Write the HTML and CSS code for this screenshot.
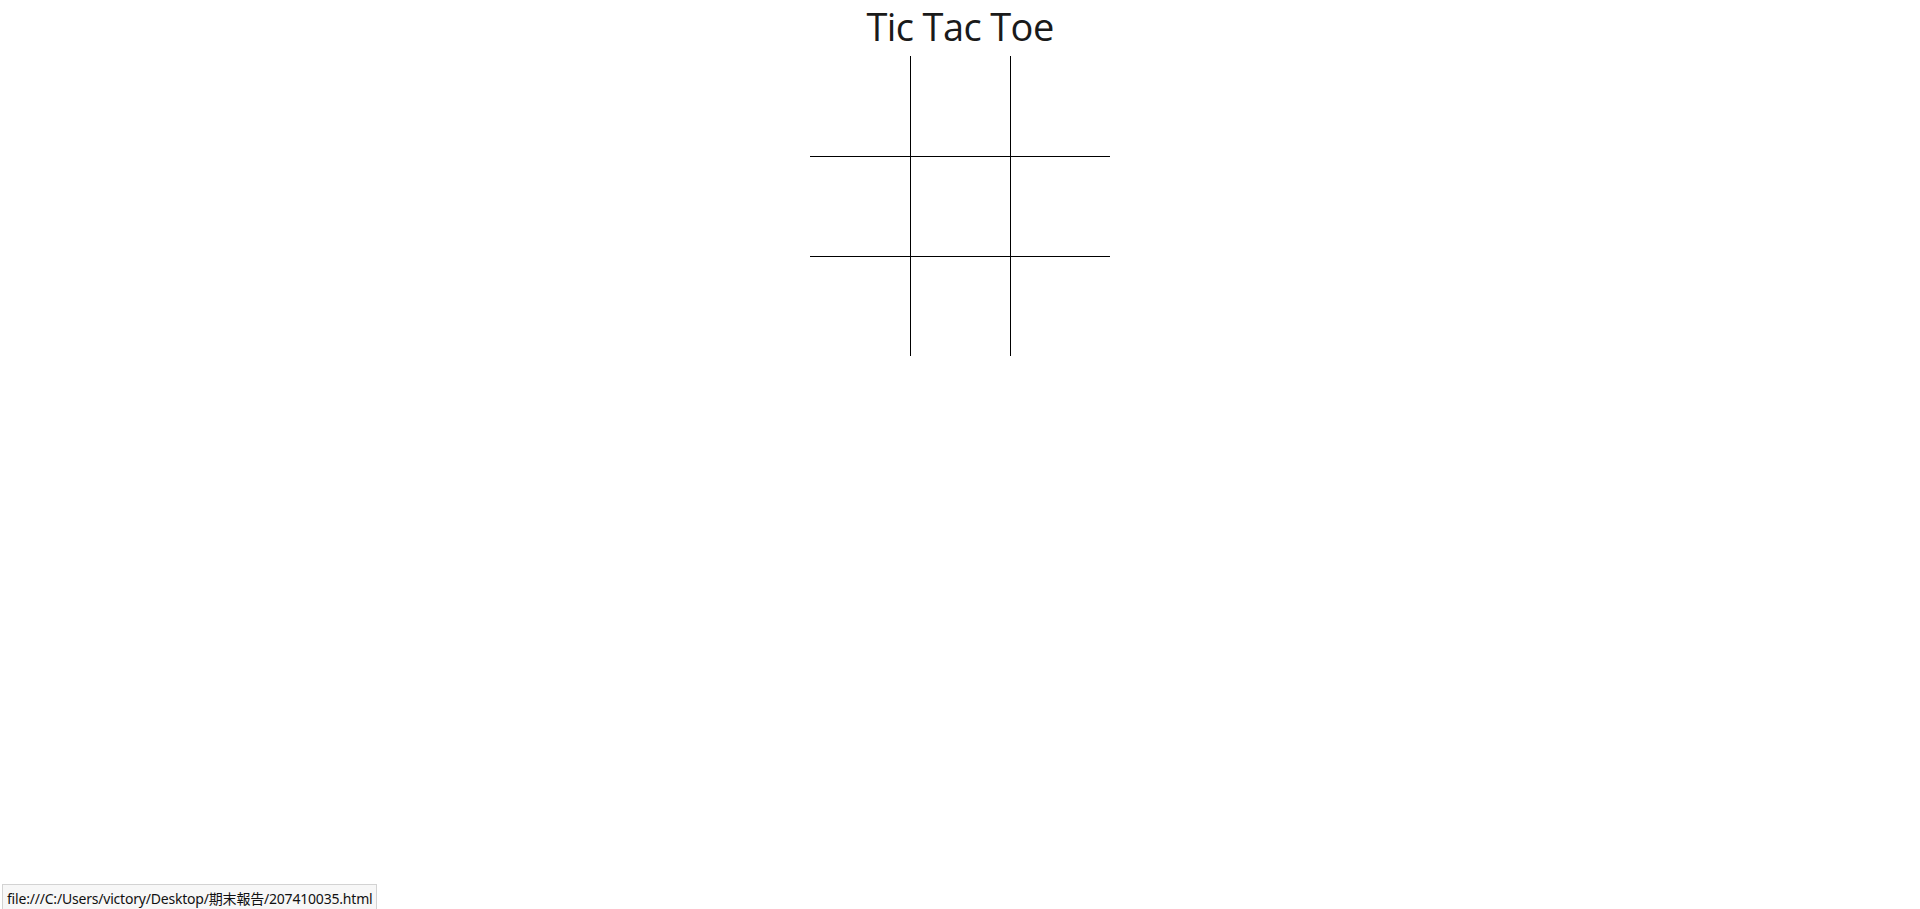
FILE: index.html
```html
<!DOCTYPE html>
<html lang="zh-Hant">
<head>
<meta charset="utf-8">
<title>Tic Tac Toe</title>
<link rel="stylesheet" href="styles.css">
</head>
<body>
<h1 class="title">Tic Tac Toe</h1>
<div class="board">
  <div class="cell"></div><div class="cell"></div><div class="cell"></div>
  <div class="cell"></div><div class="cell"></div><div class="cell"></div>
  <div class="cell"></div><div class="cell"></div><div class="cell"></div>
</div>
<div class="status">file:///C:/Users/victory/Desktop/期末報告/207410035.html</div>
</body>
</html>
```
FILE: styles.css
```css
html, body {
  margin: 0;
  padding: 0;
  background: #fff;
}
body {
  font-family: "Open Sans", "Noto Sans", "Noto Sans CJK TC", sans-serif;
  color: #1a1a1a;
}
.title {
  margin: 0 0 4px;
  font-size: 38px;
  letter-spacing: -0.6px;
  font-weight: 400;
  text-align: center;
}
.board {
  display: grid;
  grid-template-columns: repeat(3, 100px);
  grid-template-rows: repeat(3, 100px);
  width: 300px;
  margin: 0 auto;
}
.cell {
  box-sizing: border-box;
}
.cell:nth-child(3n+2), .cell:nth-child(3n) {
  border-left: 1px solid #000;
}
.cell:nth-child(n+4) {
  border-top: 1px solid #000;
}
.status {
  position: fixed;
  left: 2px;
  bottom: 0;
  height: 25px;
  padding: 3px 4px 0;
  line-height: 22px;
  box-sizing: border-box;
  background: #f7f7f7;
  border: 1px solid #d3d3d3;
  border-bottom: none;
  font-family: "Noto Sans", "Noto Sans CJK TC", sans-serif;
  font-size: 14px;
  letter-spacing: -0.2px;
  color: #111;
  white-space: nowrap;
}
```
